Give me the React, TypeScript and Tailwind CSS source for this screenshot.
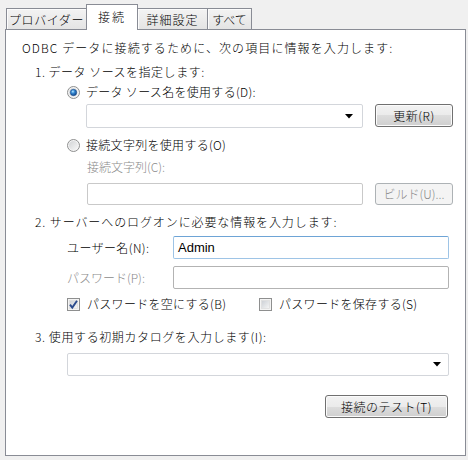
import React from "react";

const FONT = "font-['Noto_Sans_CJK_JP','Noto_Sans',sans-serif]";

function Radio({ checked }: { checked?: boolean }) {
  return (
    <svg width="13" height="13" viewBox="0 0 13 13" className="shrink-0">
      <defs>
        <linearGradient id={checked ? "rg1" : "rg0"} x1="0" y1="0" x2="1" y2="1">
          <stop offset="0" stopColor="#d2d4d6" />
          <stop offset="1" stopColor="#f7f7f7" />
        </linearGradient>
        <radialGradient id="dot" cx="0.4" cy="0.35" r="0.7">
          <stop offset="0" stopColor="#c4ecff" />
          <stop offset="0.35" stopColor="#3a8fd8" />
          <stop offset="1" stopColor="#0b3f84" />
        </radialGradient>
      </defs>
      <circle cx="6.5" cy="6.5" r="6" fill="#f4f4f4" stroke="#8e8f8f" strokeWidth="1" />
      <circle cx="6.5" cy="6.5" r="4.5" fill={`url(#${checked ? "rg1" : "rg0"})`} />
      {checked && <circle cx="6.5" cy="6.5" r="3.2" fill="url(#dot)" stroke="#1c4f8f" strokeWidth="0.6" />}
    </svg>
  );
}

function Check({ checked }: { checked?: boolean }) {
  return (
    <svg width="13" height="13" viewBox="0 0 13 13" className="shrink-0">
      <defs>
        <linearGradient id="cbg" x1="0" y1="0" x2="1" y2="1">
          <stop offset="0" stopColor="#cbcfd5" />
          <stop offset="1" stopColor="#f6f6f6" />
        </linearGradient>
      </defs>
      <rect x="0.5" y="0.5" width="12" height="12" fill="#f4f4f4" stroke="#8e8f8f" />
      <rect x="2.5" y="2.5" width="8" height="8" fill="url(#cbg)" stroke="#dedede" strokeWidth="0.8" />
      {checked && (
        <path d="M3 6.6 L5.3 9.6 L10 2.8" fill="none" stroke="#2a4a8c" strokeWidth="1.9" strokeLinejoin="miter" />
      )}
    </svg>
  );
}

function Arrow() {
  return (
    <svg width="8" height="5" viewBox="0 0 8 5">
      <path d="M0 0 H8 L4 4.5 Z" fill="#000" />
    </svg>
  );
}

const btn =
  "flex items-center justify-center rounded-[3px] border border-[#707070] bg-[linear-gradient(to_bottom,#f2f2f2_0%,#ebebeb_50%,#dddddd_50%,#cfcfcf_100%)] shadow-[inset_0_0_0_1px_#fbfbfb] text-black";

export default function App() {
  return (
    <div className={`w-[468px] h-[460px] bg-[#f0f0f0] text-[12px] leading-none font-light text-black ${FONT} overflow-hidden`}>
      {/* tabs */}
      <div className="flex items-end pl-[6px] pt-[4px] h-[29px] relative z-10">
        <div className="h-[21px] w-[81px] border border-b-0 border-[#898c95] bg-[linear-gradient(to_bottom,#f3f3f3,#e4e4e4)] shadow-[inset_1px_1px_0_#fcfcfc] flex items-center justify-center pt-[1px] tracking-[0.6px]">
          プロバイダー
        </div>
        <div className="-ml-px h-[26px] w-[52px] border border-b-0 border-[#898c95] bg-white flex items-center justify-center -mb-px pb-[2px] tracking-[2px]">
          接続
        </div>
        <div className="-ml-px h-[21px] w-[71px] border border-b-0 border-[#898c95] bg-[linear-gradient(to_bottom,#f3f3f3,#e4e4e4)] shadow-[inset_1px_1px_0_#fcfcfc] flex items-center justify-center pt-[1px] tracking-[1px]">
          詳細設定
        </div>
        <div className="-ml-px h-[21px] w-[45px] border border-b-0 border-[#898c95] bg-[linear-gradient(to_bottom,#f3f3f3,#e4e4e4)] shadow-[inset_1px_1px_0_#fcfcfc] flex items-center justify-center pt-[1px]">
          すべて
        </div>
      </div>

      {/* panel */}
      <div className="ml-[5px] w-[461px] h-[427px] border border-[#898c95] bg-white flex flex-col">
        <div className="mt-[10px] h-[16px] flex items-center ml-[16px] tracking-[1.1px]">
          ODBC データに接続するために、次の項目に情報を入力します:
        </div>
        <div className="mt-[8px] h-[16px] flex items-center ml-[29px] tracking-[0.5px]">
          1. データ ソースを指定します:
        </div>
        <div className="mt-[4px] h-[16px] flex items-center ml-[61px] gap-[6px]">
          <Radio checked />
          <span className="tracking-[0.3px]">データ ソース名を使用する(D):</span>
        </div>
        <div className="mt-[4px] flex ml-[80px] gap-[12px] items-start">
          <div className="w-[277px] h-[24px] border border-[#d3d6db] rounded-[2px] bg-white flex items-center justify-end pr-[9px]">
            <Arrow />
          </div>
          <div className={`${btn} w-[78px] h-[23px] tracking-[0.5px]`}>更新(R)</div>
        </div>
        <div className="mt-[9px] h-[16px] flex items-center ml-[61px] gap-[6px]">
          <Radio />
          <span className="tracking-[0.3px]">接続文字列を使用する(O)</span>
        </div>
        <div className="mt-[6px] h-[16px] flex items-center ml-[81px] text-[#8b8b8b]">
          接続文字列(C):
        </div>
        <div className="mt-[8px] flex ml-[81px] gap-[12px] items-start">
          <div className="w-[276px] h-[22px] border border-[#c9c9c9] rounded-[2px] bg-white" />
          <div className="w-[78px] h-[22px] rounded-[3px] border border-[#adb2b5] bg-[#f4f4f4] text-[#8b8b8b] flex items-center justify-center">
            ビルド(U)...
          </div>
        </div>
        <div className="mt-[9px] h-[16px] flex items-center ml-[29px] tracking-[0.9px]">
          2. サーバーへのログオンに必要な情報を入力します:
        </div>
        <div className="mt-[6px] flex items-center ml-[61px]">
          <span className="w-[106px] tracking-[0.4px]">ユーザー名(N):</span>
          <div className="w-[276px] h-[23px] border border-[#9ec4e6] border-t-[#6ea4d6] rounded-[2px] bg-white flex items-center pl-[4px] font-['Liberation_Sans',sans-serif] font-normal text-[13px]">
            Admin
          </div>
        </div>
        <div className="mt-[7px] flex items-center ml-[61px]">
          <span className="w-[106px] text-[#8b8b8b]">パスワード(P):</span>
          <div className="w-[276px] h-[23px] border border-[#b3b3b3] rounded-[2px] bg-white" />
        </div>
        <div className="mt-[7px] h-[16px] flex items-center ml-[61px]">
          <Check checked />
          <span className="ml-[7px] w-[172px] tracking-[0.3px]">パスワードを空にする(B)</span>
          <Check />
          <span className="ml-[7px] tracking-[0.3px]">パスワードを保存する(S)</span>
        </div>
        <div className="mt-[17px] h-[16px] flex items-center ml-[29px] tracking-[0.6px]">
          3. 使用する初期カタログを入力します(I):
        </div>
        <div className="mt-[8px] ml-[61px] w-[382px] h-[23px] border border-[#d3d6db] rounded-[2px] bg-white flex items-center justify-end pr-[7px]">
          <Arrow />
        </div>
        <div className="mt-[19px] ml-[319px] flex">
          <div className={`${btn} w-[123px] h-[23px] tracking-[0.5px]`}>接続のテスト(T)</div>
        </div>
      </div>
    </div>
  );
}
